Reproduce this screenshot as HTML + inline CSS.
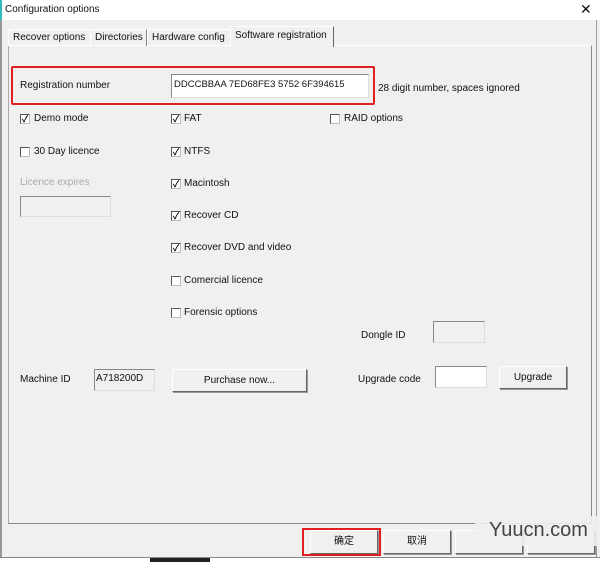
<!DOCTYPE html><html><head><style>
body{margin:0;width:600px;height:562px;overflow:hidden;background:#f0f0f0;font-family:"Liberation Sans","Noto Sans CJK SC",sans-serif;font-size:10px;color:#111;position:relative}
.a{position:absolute}
.cb{position:absolute;width:8px;height:8px;border:1px solid #555;border-right-color:#bbb;border-bottom-color:#bbb;background:#fff;font-size:9px;line-height:8px;text-align:center;font-weight:bold}
.t{position:absolute;white-space:nowrap}
.btn{position:absolute;background:#f0f0f0;border:1px solid #fff;border-right-color:#666;border-bottom-color:#666;box-shadow:1px 1px 0 #999;text-align:center}
.in{position:absolute;border:1px solid #888;border-right-color:#ddd;border-bottom-color:#ddd;box-sizing:border-box}
</style></head><body>
<div class="a" style="left:0;top:0;width:600px;height:20px;background:#fff"></div>
<div class="a" style="left:0;top:0;width:2px;height:30px;background:#3bb"></div>
<div class="t" style="left:5px;top:4px">Configuration options</div>
<div class="t" style="left:580px;top:1px;font-size:14px">✕</div>
<div class="a" style="left:0;top:20px;width:2px;height:540px;background:#999"></div>
<div class="a" style="left:596px;top:20px;width:1px;height:540px;background:#999"></div>
<div class="a" style="left:8px;top:45px;width:582px;height:477px;border:1px solid #fff;border-right-color:#888;border-bottom-color:#888;border-left-color:#aaa"></div>
<div class="a" style="left:8px;top:29px;width:81px;height:16px;border:1px solid #fff;border-right-color:#888;border-bottom:none"></div>
<div class="t" style="left:13px;top:32px">Recover options</div>
<div class="a" style="left:90px;top:29px;width:55px;height:16px;border:1px solid #fff;border-right-color:#888;border-bottom:none"></div>
<div class="t" style="left:95px;top:32px">Directories</div>
<div class="a" style="left:147px;top:29px;width:82px;height:16px;border:1px solid #fff;border-right-color:#888;border-bottom:none"></div>
<div class="t" style="left:152px;top:32px">Hardware config</div>
<div class="a" style="left:230px;top:26px;width:102px;height:20px;border:1px solid #fff;border-right-color:#666;border-bottom:none;background:#f0f0f0"></div>
<div class="t" style="left:235px;top:30px">Software registration</div>
<div class="a" style="left:11px;top:66px;width:360px;height:35px;border:2px solid #e02020;border-radius:2px"></div>
<div class="t" style="left:20px;top:80px">Registration number</div>
<div class="in" style="left:171px;top:74px;width:198px;height:24px;background:#fff"></div>
<div class="t" style="left:174px;top:79px;font-size:9.5px">DDCCBBAA 7ED68FE3 5752 6F394615</div>
<div class="t" style="left:378px;top:83px">28 digit number, spaces ignored</div>
<div class="cb" style="left:20px;top:114px">✓</div><div class="t" style="left:34px;top:113px">Demo mode</div>
<div class="cb" style="left:20px;top:147px"></div><div class="t" style="left:34px;top:146px">30 Day licence</div>
<div class="t" style="left:20px;top:177px;color:#aaa">Licence expires</div>
<div class="in" style="left:20px;top:196px;width:91px;height:21px"></div>
<div class="cb" style="left:171px;top:114px">✓</div><div class="t" style="left:184px;top:113px">FAT</div>
<div class="cb" style="left:171px;top:147px">✓</div><div class="t" style="left:184px;top:146px">NTFS</div>
<div class="cb" style="left:171px;top:179px">✓</div><div class="t" style="left:184px;top:178px">Macintosh</div>
<div class="cb" style="left:171px;top:211px">✓</div><div class="t" style="left:184px;top:210px">Recover CD</div>
<div class="cb" style="left:171px;top:243px">✓</div><div class="t" style="left:184px;top:242px">Recover DVD and video</div>
<div class="cb" style="left:171px;top:276px"></div><div class="t" style="left:184px;top:275px">Comercial licence</div>
<div class="cb" style="left:171px;top:308px"></div><div class="t" style="left:184px;top:307px">Forensic options</div>
<div class="cb" style="left:330px;top:114px"></div><div class="t" style="left:344px;top:113px">RAID options</div>
<div class="t" style="left:361px;top:330px">Dongle ID</div>
<div class="in" style="left:433px;top:321px;width:52px;height:22px"></div>
<div class="t" style="left:20px;top:374px">Machine ID</div>
<div class="in" style="left:94px;top:369px;width:61px;height:22px"></div>
<div class="t" style="left:96px;top:373px">A718200D</div>
<div class="btn" style="left:172px;top:369px;width:133px;height:21px;line-height:21px">Purchase now...</div>
<div class="t" style="left:358px;top:374px">Upgrade code</div>
<div class="in" style="left:435px;top:366px;width:52px;height:22px;background:#fff"></div>
<div class="btn" style="left:499px;top:366px;width:66px;height:21px;line-height:21px">Upgrade</div>
<div class="btn" style="left:310px;top:530px;width:66px;height:22px;line-height:22px;font-size:10px">确定</div>
<div class="a" style="left:302px;top:528px;width:75px;height:24px;border:2px solid #e02020"></div>
<div class="btn" style="left:383px;top:530px;width:66px;height:22px;line-height:22px;font-size:10px">取消</div>
<div class="btn" style="left:455px;top:530px;width:66px;height:22px"></div>
<div class="btn" style="left:527px;top:530px;width:66px;height:22px"></div>
<div class="a" style="left:475px;top:516px;width:122px;height:30px;background:#f0f0f0;opacity:.9"></div>
<div class="t" style="left:489px;top:519px;font-size:20px;color:#444">Yuucn.com</div>
<div class="a" style="left:0;top:557px;width:600px;height:1px;background:#888"></div>
<div class="a" style="left:0;top:558px;width:600px;height:4px;background:#fff"></div>
<div class="a" style="left:150px;top:558px;width:60px;height:4px;background:#222"></div>
</body></html>
